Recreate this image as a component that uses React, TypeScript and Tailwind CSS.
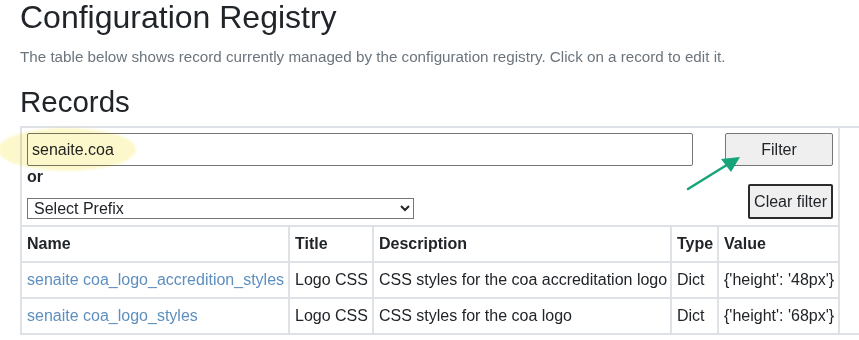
import React from "react";

const rows = [
  {
    name: "senaite coa_logo_accredition_styles",
    title: "Logo CSS",
    description: "CSS styles for the coa accreditation logo",
    type: "Dict",
    value: "{'height': '48px'}",
  },
  {
    name: "senaite coa_logo_styles",
    title: "Logo CSS",
    description: "CSS styles for the coa logo",
    type: "Dict",
    value: "{'height': '68px'}",
  },
];

const cell = "border-2 border-[#dee2e6] px-[5px] py-2 leading-[18px] text-left align-top whitespace-nowrap";

export default function App() {
  return (
    <div className="relative h-[340px] w-[859px] overflow-hidden bg-white pl-5 text-[#212529] [font-family:'Liberation_Sans',Arial,sans-serif]">
      <h1 className="mt-px text-[32px] leading-[32px] font-normal">Configuration Registry</h1>
      <p className="mt-[14px] text-[15.2px] leading-[20px] text-[#6c757d]">
        The table below shows record currently managed by the configuration registry. Click on a record to edit it.
      </p>
      <h2 className="mt-5 text-[29.5px] leading-[29px] font-normal">Records</h2>

      <div className="mt-[10px] w-[900px] border-y-2 border-[#dee2e6]">
        <table className="w-[818px] table-fixed border-collapse text-[16px]">
          <colgroup>
            <col className="w-[268px]" />
            <col className="w-[84px]" />
            <col className="w-[298px]" />
            <col className="w-[47px]" />
            <col className="w-[121px]" />
          </colgroup>
          <tbody>
            <tr>
              <td colSpan={5} className="border-2 border-t-0 border-[#dee2e6] px-[5px] pt-[5px] pb-[6px]">
                <div className="flex justify-between">
                  <div className="flex w-[666px] flex-col">
                    <input
                      defaultValue="senaite.coa"
                      className="h-[33px] w-[666px] rounded-[2px] border border-[#767676] px-[4px] text-[16px] outline-none"
                    />
                    <label className="mt-[2px] block leading-[18px] font-bold">or</label>
                    <select className="mt-[12px] h-[21px] w-[387px] border border-[#767676] bg-white pl-[2px] text-[16px] leading-[18px]">
                      <option>Select Prefix</option>
                    </select>
                  </div>
                  <div className="flex flex-col items-end">
                    <button className="h-[33px] w-[108px] rounded-[2px] border border-[#767676] bg-[#efefef] text-[16px]">
                      Filter
                    </button>
                    <button className="mt-[18px] h-[35px] w-[85px] rounded-[2px] border-2 border-[#2b2b2b] bg-[#efefef] text-[16px]">
                      Clear filter
                    </button>
                  </div>
                </div>
              </td>
            </tr>
            <tr>
              <th className={`${cell} font-bold`}>Name</th>
              <th className={`${cell} font-bold`}>Title</th>
              <th className={`${cell} font-bold`}>Description</th>
              <th className={`${cell} font-bold`}>Type</th>
              <th className={`${cell} font-bold`}>Value</th>
            </tr>
            {rows.map((r, i) => (
              <tr key={r.name}>
                <td className={`${cell} ${i === rows.length - 1 ? "border-b-0" : ""}`}>
                  <a href="#" className="text-[#5d8fbf]">{r.name}</a>
                </td>
                <td className={`${cell} ${i === rows.length - 1 ? "border-b-0" : ""}`}>{r.title}</td>
                <td className={`${cell} ${i === rows.length - 1 ? "border-b-0" : ""}`}>{r.description}</td>
                <td className={`${cell} ${i === rows.length - 1 ? "border-b-0" : ""}`}>{r.type}</td>
                <td className={`${cell} ${i === rows.length - 1 ? "border-b-0" : ""}`}>{r.value}</td>
              </tr>
            ))}
          </tbody>
        </table>
      </div>

      {/* yellow marker highlight over the search box */}
      <div className="pointer-events-none absolute left-[-2px] top-[128px] h-[43px] w-[138px] rounded-[50%] bg-[#fbf3a0] opacity-55 blur-[1px] mix-blend-multiply" />

      {/* green pointer arrow */}
      <svg className="pointer-events-none absolute left-[680px] top-[150px]" width="70" height="45" viewBox="0 0 70 45">
        <line x1="8" y1="39" x2="50" y2="13" stroke="#17a47a" strokeWidth="2.5" strokeLinecap="round" />
        <polygon points="60,7 41,9 51,22" fill="#17a47a" />
      </svg>
    </div>
  );
}
